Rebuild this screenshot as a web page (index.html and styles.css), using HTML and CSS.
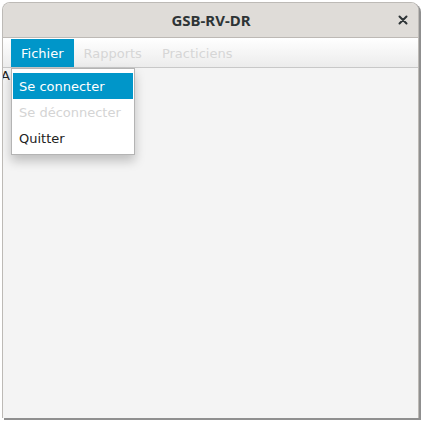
FILE: index.html
```html
<!DOCTYPE html>
<html>
<head>
<meta charset="utf-8">
<link rel="stylesheet" href="styles.css">
</head>
<body>
<div class="window">
  <div class="titlebar">
    <span class="title">GSB-RV-DR</span>
    <span class="close">
      <svg width="10" height="10" viewBox="0 0 10 10"><path d="M1.5 1.5 L8.5 8.5 M8.5 1.5 L1.5 8.5" stroke="#2e3436" stroke-width="2" stroke-linecap="round"/></svg>
    </span>
  </div>
  <div class="menubar">
    <span class="menu active">Fichier</span>
    <span class="menu disabled">Rapports</span>
    <span class="menu disabled">Practiciens</span>
  </div>
  <div class="content">
    <span class="stray">A</span>
    <div class="popup">
      <div class="item selected">Se connecter</div>
      <div class="item disabled">Se déconnecter</div>
      <div class="item">Quitter</div>
    </div>
  </div>
</div>
</body>
</html>
```
FILE: styles.css
```css
html, body {
  margin: 0;
  padding: 0;
  background: #ffffff;
}
body {
  width: 423px;
  height: 421px;
  overflow: hidden;
  font-family: "DejaVu Sans", sans-serif;
}
.window {
  margin: 2px 0 0 2px;
  width: 415px;
  height: 415px;
  border: 1px solid #bdbab6;
  border-bottom: none;
  border-radius: 8px 8px 0 0;
  box-shadow: 2px 2px 0 #8f8f8f;
  background: #f4f4f4;
  display: flex;
  flex-direction: column;
  overflow: hidden;
}
.titlebar {
  height: 34px;
  background: #dfdcd8;
  border-bottom: 1px solid #bdb9b5;
  display: flex;
  align-items: center;
  justify-content: center;
  position: relative;
  flex: none;
}
.title {
  font-family: "Noto Sans", "DejaVu Sans", sans-serif;
  font-weight: bold;
  font-size: 15px;
  color: #2e3436;
  margin-left: 1px;
}
.close {
  position: absolute;
  right: 10px;
  top: 12px;
  width: 10px;
  height: 10px;
  display: flex;
}
.menubar {
  background: linear-gradient(#ffffff, #ececec);
  border-bottom: 1px solid #c8c8c8;
  display: flex;
  align-items: stretch;
  padding: 1px 0 0 8px;
  box-sizing: border-box;
  height: 30px;
  flex: none;
}
.menu {
  font-size: 13px;
  padding: 0 10px;
  display: flex;
  align-items: center;
  color: #333;
}
.menu.active {
  background: #0096c9;
  color: #ffffff;
}
.menu.disabled {
  color: #d6d6d6;
}
.content {
  flex: 1;
  position: relative;
  background: #f4f4f4;
}
.stray {
  position: absolute;
  left: -2px;
  top: 0px;
  font-size: 13px;
  color: #222;
}
.popup {
  position: absolute;
  left: 8px;
  top: 0px;
  width: 120px;
  background: #ffffff;
  border: 1px solid #b4b4b4;
  padding: 4px 1px 3px;
  box-shadow: 0 6px 10px rgba(0,0,0,0.22);
}
.item {
  height: 26px;
  font-size: 13px;
  display: flex;
  align-items: center;
  padding-left: 6px;
  color: #222;
}
.item.selected {
  background: #0096c9;
  color: #ffffff;
}
.item.disabled {
  color: #d4d4d4;
}
```
